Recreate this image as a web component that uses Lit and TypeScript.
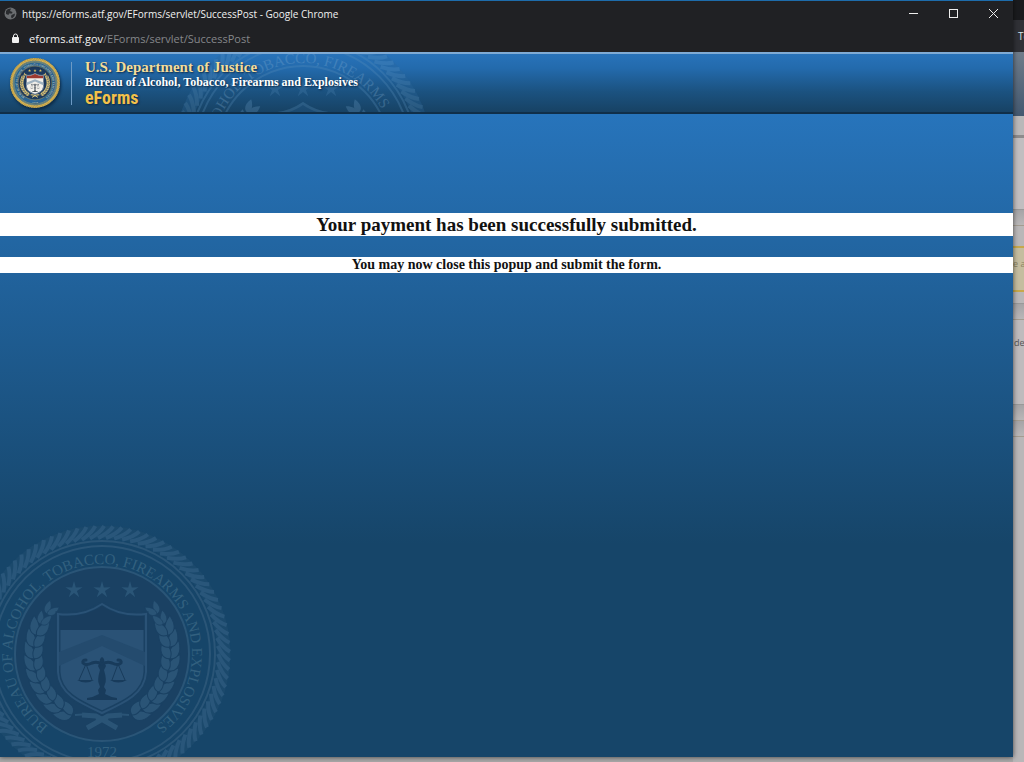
import { LitElement, html, svg, css } from "lit";
import { customElement, property } from "lit/decorators.js";

const rad = (deg: number) => (deg * Math.PI) / 180;
const polar = (r: number, deg: number) =>
  `${(r * Math.cos(rad(deg))).toFixed(1)} ${(r * Math.sin(rad(deg))).toFixed(1)}`;

/* Strands of the rope border, each slanting clockwise as it goes outwards. */
const rope = Array.from({ length: 90 }, (_, i) => {
  const a = i * 4;
  return `M${polar(116, a)}Q${polar(121, a + 5)} ${polar(128, a + 7)}`;
}).join("");

const starPath = (cx: number, cy: number) =>
  "M" +
  Array.from({ length: 10 }, (_, i) => {
    const r = i % 2 ? 3 : 9;
    const a = rad(-90 + i * 36);
    return `${(cx + r * Math.cos(a)).toFixed(1)} ${(cy + r * Math.sin(a)).toFixed(1)}`;
  }).join("L") +
  "Z";

const stars = [-28, 0, 28].map((x) => starPath(x, -64)).join("");

const leaf = "M0 0C2 -7 10 -9 20 -1C13 4 4 5 0 0Z";

/* One laurel branch: pairs of leaves along an arc, tips towards the top. */
const branch = () =>
  Array.from({ length: 11 }, (_, i) => {
    const a = 116 + i * 10;
    const x = (68 * Math.cos(rad(a))).toFixed(1);
    const y = (68 * Math.sin(rad(a))).toFixed(1);
    const s = i > 8 ? 0.7 : 1;
    return svg`
      <path d=${leaf} transform=${`translate(${x} ${y}) rotate(${a + 70}) scale(${s})`} />
      <path d=${leaf} transform=${`translate(${x} ${y}) rotate(${a + 112}) scale(${s} ${-s})`} />`;
  });

@customElement("bureau-seal")
export class BureauSeal extends LitElement {
  @property({ reflect: true }) tone: "faint" | "colour" = "faint";

  static styles = css`
    :host {
      display: block;
      --rope: #29567a;
      --rope-bed: #1b496c;
      --band: transparent;
      --line: #2a5577;
      --letters: #32607f;
      --disc: #1a4163;
      --star: #2a5577;
      --leaf: #2a5476;
      --shield: #2a5276;
      --chief: #193d5e;
      --chevron: #244b6e;
      --scales: #183b5b;
    }
    :host([tone="colour"]) {
      --rope: #e3bf5c;
      --rope-bed: #a88a3c;
      --band: #2a6596;
      --line: #d9b551;
      --letters: #e6e2c4;
      --disc: #1d3a5e;
      --star: #f0d060;
      --leaf: #e2c878;
      --shield: #f2f0ea;
      --chief: #9c3a30;
      --chevron: #9fb2c0;
      --scales: #3c4650;
    }
    svg { display: block; width: 100%; height: 100%; }
    .bed { fill: var(--band); stroke: var(--rope-bed); stroke-width: 13; }
    .rope { stroke: var(--rope); stroke-width: 4; fill: none; }
    .ring { fill: none; stroke: var(--line); stroke-width: 2; }
    .disc { fill: var(--disc); stroke: var(--line); stroke-width: 2; }
    .letters { font: 15px "Liberation Serif", serif; fill: var(--letters); stroke: none; }
    .star { fill: var(--star); }
    .leaf { fill: var(--leaf); stroke: var(--disc); stroke-width: 1; }
    .shield { fill: var(--shield); stroke: var(--disc); stroke-width: 5; }
    .chief { fill: var(--chief); }
    .chevron { fill: var(--chevron); }
    .edge { fill: none; stroke: var(--shield); stroke-width: 2; }
    .post { fill: var(--scales); }
    .arms { fill: none; stroke: var(--scales); stroke-width: 3; stroke-linecap: round; }
    .cords { fill: none; stroke: var(--scales); stroke-width: 1; }
    .rifles { fill: none; stroke: var(--leaf); stroke-width: 5; }
    .twigs { fill: none; stroke: var(--leaf); stroke-width: 2; }
  `;

  render() {
    const outline = "M0 -50C-13 -41 -28 -38 -44 -40V18C-43 40 -22 49 0 59C22 49 43 40 44 18V-40C28 -38 13 -41 0 -50Z";
    return html`
      <svg viewBox="-129 -129 258 258" aria-hidden="true">
        <defs>
          <path id="around" d="M0 90A90 90 0 0 1 0 -90A90 90 0 0 1 0 90" />
        </defs>
        <circle class="bed" r="122" />
        <path class="rope" d=${rope} />
        <circle class="ring" r="113" />
        <circle class="ring" r="108" />
        <circle class="disc" r="87" />
        <text class="letters" text-anchor="middle">
          <textPath href="#around" startOffset="50%">BUREAU OF ALCOHOL, TOBACCO, FIREARMS AND EXPLOSIVES</textPath>
        </text>
        <text class="letters" text-anchor="middle" x="0" y="103">1972</text>
        <path class="star" d=${stars} />
        <g class="leaf">${branch()}</g>
        <g class="leaf" transform="scale(-1 1)">${branch()}</g>
        <path class="twigs" d="M-27 61Q-10 59 6 66M27 61Q10 59 -6 66" />
        <path class="rifles" d="M-15 74L6 62L20 61M15 74L-6 62L-20 61" />
        <path class="shield" d=${outline} />
        <path class="chief" d="M0 -48C-13 -39 -28 -37 -42 -38V-24H42V-38C28 -37 13 -39 0 -48Z" />
        <path class="chevron" d="M0 -19L43 -2V12L0 -8L-43 12V-2Z" />
        <path class="edge" d=${outline} />
        <path class="post" d="M0 3Q3 5 2 8L4 12L2 16Q5 26 3 30L2 33L4 36L3 40Q8 43 15 44V46H-15V44Q-8 43 -3 40L-4 36L-2 33L-3 30Q-5 26 -2 16L-4 12L-2 8Q-3 5 0 3Z" />
        <path class="arms" d="M-16 6Q-20 6 -19 9Q-16 12 -10 9Q-5 7 0 10Q5 7 10 9Q16 12 19 9Q20 6 16 6" />
        <path class="cords" d="M-16 10L-23 26M-16 10L-10 26M16 10L23 26M16 10L10 26" />
        <path class="post" d="M-25 26H-8Q-16 31 -25 26ZM25 26H8Q16 31 25 26Z" />
      </svg>
    `;
  }
}

@customElement("app-root")
export class AppRoot extends LitElement {
  static styles = css`
    :host {
      display: grid;
      grid-template-columns: minmax(0, 1fr) 11px;
      height: 100vh;
      overflow: hidden;
      background: #a9a8a8;
    }
    .popup {
      display: flex;
      flex-direction: column;
      margin-bottom: 5px;
      border-top: 1px solid #1d6cab;
      box-shadow: 0 0 5px rgba(0, 0, 0, 0.65);
      position: relative;
      z-index: 1;
      min-width: 0;
    }
    .chrome {
      background: #202124;
      color: #f1f1f1;
      font-family: "Open Sans", "Noto Sans", sans-serif;
    }
    .titlebar {
      display: flex;
      align-items: center;
      height: 25px;
      padding-left: 4px;
      gap: 5px;
      font-size: 10px;
    }
    .globe { width: 13px; height: 13px; flex: none; }
    .title { flex: 1; white-space: nowrap; }
    .controls { display: flex; }
    .control {
      width: 40px;
      height: 25px;
      padding: 0;
      border: 0;
      background: none;
      display: grid;
      place-items: center;
    }
    .control svg { width: 11px; height: 11px; fill: none; stroke: #eee; stroke-width: 1; }
    .address {
      display: flex;
      align-items: center;
      height: 24px;
      padding: 0 0 2px 11px;
      gap: 9px;
      font-size: 11px;
    }
    .lock { width: 9px; height: 11px; flex: none; }
    .path { color: #85878a; }
    .banner {
      display: flex;
      align-items: center;
      position: relative;
      overflow: hidden;
      height: 62px;
      box-sizing: border-box;
      padding-left: 10px;
      border-top: 2px solid #7fabd5;
      border-bottom: 2px solid #102f49;
      background: linear-gradient(#2873ba, #236aac 25%, #1b5280 65%, #174264);
      font-family: "Liberation Serif", serif;
      font-weight: bold;
      text-shadow: 1px 1px 2px #0b2844;
    }
    .ghost {
      position: absolute;
      left: 174px;
      top: -30px;
      width: 258px;
      height: 258px;
      opacity: 0.28;
      text-shadow: none;
      --disc: transparent;
      --rope: #5b91bd;
      --rope-bed: #2d679a;
      --line: #5b91bd;
      --letters: #86b2d6;
      --leaf: #6a9cc5;
      --star: #4f85b2;
      --shield: #5b91bd;
      --chief: #275f91;
    }
    .logo {
      width: 50px;
      height: 50px;
      border-radius: 50%;
      box-shadow: 1px 2px 3px #0b2844;
    }
    .rule { width: 1px; height: 43px; margin: 0 13px 0 11px; background: #6d9ac4; }
    .names { position: relative; white-space: nowrap; padding-top: 1px; }
    .names p { margin: 0; }
    .department { color: #f3dc9a; font-size: 15px; line-height: 15px; }
    .bureau { color: #fff; font-size: 12px; line-height: 14px; }
    .product {
      color: #f2c14a;
      font-family: "Liberation Sans Narrow", "Roboto Condensed", Roboto, sans-serif;
      font-size: 18px;
      line-height: 18px;
    }
    .page {
      flex: 1;
      position: relative;
      overflow: hidden;
      padding-top: 99px;
      background: linear-gradient(#2774bb, #164569 430px);
      font-family: "Liberation Serif", serif;
      text-align: center;
      color: #111;
    }
    h1, h2 { margin: 0; background: #fff; }
    h1 { font-size: 19px; line-height: 23px; margin-bottom: 21px; }
    h2 { font-size: 14px; line-height: 16px; }
    .watermark {
      position: absolute;
      left: -27px;
      bottom: -26px;
      width: 258px;
      height: 258px;
    }
    .behind {
      display: flex;
      flex-direction: column;
      overflow: hidden;
      background: #b9b7b8;
      font: 9px/12px "Open Sans", sans-serif;
      white-space: nowrap;
      color: #555;
    }
    .behind div { flex: none; box-sizing: border-box; display: flex; align-items: center; }
    .tabs { height: 20px; background: #1a1b1e; }
    .bar { height: 32px; background: #303136; color: #d5e4ea; padding-left: 5px; font-size: 10px; }
    .hero { height: 64px; background: linear-gradient(#6f7c8a, #435870); }
    .strip { height: 22px; background: #bab8b9; border-bottom: 3px solid #8d8b8c; }
    .panel { height: 72px; background: #c1bec0; border-bottom: 1px solid #999; }
    .gap { height: 16px; background: linear-gradient(#a5a4a6, #b9b7b8); border-bottom: 1px solid #a39c90; }
    .space { height: 20px; }
    .notice { height: 46px; background: #c5bd9f; border: solid #c7a84c; border-width: 2px 0; color: #8a825f; padding: 0 0 10px 0; }
    .foot { height: 12px; background: #b9b7b8; border-bottom: 1px solid #999; }
    .card { height: 85px; background: #bebbbd; border-bottom: 1px solid #999; padding: 0 0 38px 1px; }
  `;

  render() {
    return html`
      <main class="popup">
        <header class="chrome">
          <div class="titlebar">
            <svg class="globe" viewBox="0 0 13 13" aria-hidden="true">
              <circle cx="6.5" cy="6.5" r="6" fill="#6a6d70" />
              <path d="M2 4L4 2L7 1.5L6 4L8.5 5L8 6.5H5L4.5 8L2 7ZM7.5 8L11 6.5L10.5 9L8 11.5L7 10Z" fill="#292b2e" />
            </svg>
            <span class="title">https://eforms.atf.gov/EForms/servlet/SuccessPost - Google Chrome</span>
            <div class="controls">
              <button class="control" aria-label="Minimize">
                <svg viewBox="0 0 11 11"><path d="M1 5.5H10" /></svg>
              </button>
              <button class="control" aria-label="Maximize">
                <svg viewBox="0 0 11 11"><rect x="1.5" y="1.5" width="8" height="8" /></svg>
              </button>
              <button class="control" aria-label="Close">
                <svg viewBox="0 0 11 11"><path d="M1 1L10 10M10 1L1 10" /></svg>
              </button>
            </div>
          </div>
          <div class="address">
            <svg class="lock" viewBox="0 0 9 11" aria-hidden="true">
              <rect x="1" y="4" width="7" height="6" rx="1" fill="#f1f1f1" />
              <path d="M2.5 4.5V3A2 2 0 0 1 6.5 3V4.5" fill="none" stroke="#f1f1f1" />
            </svg>
            <span>eforms.atf.gov<span class="path">/EForms/servlet/SuccessPost</span></span>
          </div>
        </header>
        <div class="banner">
          <bureau-seal class="ghost"></bureau-seal>
          <bureau-seal class="logo" tone="colour"></bureau-seal>
          <span class="rule"></span>
          <div class="names">
            <p class="department">U.S. Department of Justice</p>
            <p class="bureau">Bureau of Alcohol, Tobacco, Firearms and Explosives</p>
            <p class="product">eForms</p>
          </div>
        </div>
        <section class="page">
          <bureau-seal class="watermark"></bureau-seal>
          <h1>Your payment has been successfully submitted.</h1>
          <h2>You may now close this popup and submit the form.</h2>
        </section>
      </main>
      <aside class="behind">
        <div class="tabs"></div>
        <div class="bar">To</div>
        <div class="hero"></div>
        <div class="strip"></div>
        <div class="panel"></div>
        <div class="gap"></div>
        <div class="space"></div>
        <div class="notice">e a</div>
        <div class="foot"></div>
        <div class="gap"></div>
        <div class="card">de</div>
        <div class="gap"></div>
        <div class="gap"></div>
      </aside>
    `;
  }
}
